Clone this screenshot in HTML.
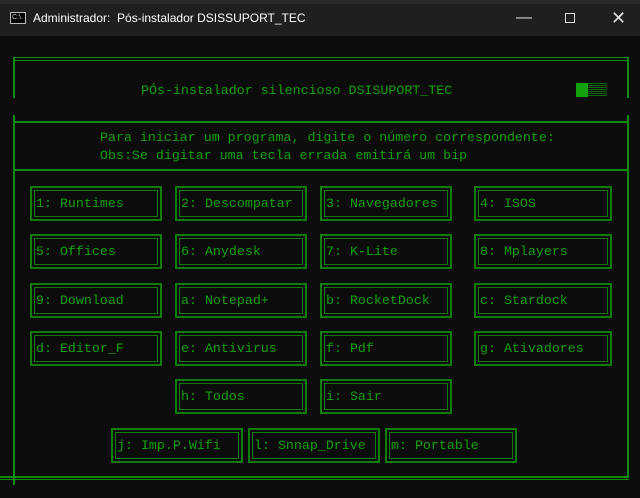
<!DOCTYPE html>
<html><head><meta charset="utf-8"><style>
*{margin:0;padding:0;box-sizing:border-box}
body{width:640px;height:498px;background:#0c0c0c;position:relative;overflow:hidden;font-family:"Liberation Mono",monospace;}
.tb{position:absolute;left:0;top:0;width:640px;height:36px;background:#1f1f1f;}
.top{position:absolute;left:0;top:0;width:640px;height:4px;background:#2a2a2a}
.tt{position:absolute;left:33px;top:11px;color:#fff;font:12px "Liberation Sans",sans-serif;}
.ic{position:absolute;left:10px;top:12px;width:16px;height:12px;border:1px solid #bbb;background:#000;color:#ccc;font:7px "Liberation Sans",sans-serif;line-height:9px;padding-left:1px}
.c{position:absolute;color:#ddd;font:16px "Liberation Sans",sans-serif}
.g{color:#13a10e;font-size:13.3px;position:absolute;white-space:pre;line-height:16px}
.ln{position:absolute;background:#108a0c}
.b{position:absolute;height:35px;border:2px solid #107c0c;padding:2px}
.b div{width:100%;height:100%;border:1px solid #107c0c}
.b span{position:absolute;left:4px;top:8px;color:#13a10e;font-size:13.3px;white-space:pre}
</style></head><body>
<div class="tb"></div><div class="top"></div>
<div class="ic">C:\.</div>
<div class="tt">Administrador:&nbsp; Pós-instalador DSISSUPORT_TEC</div>
<div class="c" style="left:516px;top:9px">—</div>
<div style="position:absolute;left:565px;top:13px;width:10px;height:10px;border:1px solid #ddd"></div>
<div class="c" style="left:611px;top:8px;font-size:18px">✕</div>

<!-- outer frame lines -->
<div class="ln" style="left:13px;top:57px;width:616px;height:1px"></div>
<div class="ln" style="left:15px;top:60px;width:612px;height:1px"></div>
<div class="ln" style="left:13px;top:57px;width:2px;height:41px"></div>
<div class="ln" style="left:627px;top:57px;width:2px;height:41px"></div>
<div class="ln" style="left:13px;top:115px;width:2px;height:370px"></div>
<div class="ln" style="left:627px;top:115px;width:2px;height:362px"></div>
<div class="ln" style="left:13px;top:121px;width:616px;height:2px"></div>
<div class="ln" style="left:13px;top:169px;width:616px;height:2px"></div>
<div class="ln" style="left:0px;top:476px;width:629px;height:2px"></div>
<div class="ln" style="left:0px;top:479px;width:629px;height:1px"></div>

<div class="g" style="left:141px;top:83px">PÓs-instalador silencioso DSISUPORT_TEC</div>
<div style="position:absolute;left:576px;top:83px;width:12px;height:14px;background:#13a10e"></div>
<div style="position:absolute;left:588px;top:83px;width:19px;height:14px;background:repeating-linear-gradient(#13a10e 0 1px,transparent 1px 2px);opacity:.6"></div>

<div class="g" style="left:100px;top:130px">Para iniciar um programa, digite o número correspondente:</div>
<div class="g" style="left:100px;top:148px">Obs:Se digitar uma tecla errada emitirá um bip</div>

<div class="b" style="left:30px;top:186px;width:132px"><div></div><span>1: Runtimes</span></div>
<div class="b" style="left:175px;top:186px;width:132px"><div></div><span>2: Descompatar</span></div>
<div class="b" style="left:320px;top:186px;width:132px"><div></div><span>3: Navegadores</span></div>
<div class="b" style="left:474px;top:186px;width:138px"><div></div><span>4: ISOS</span></div>

<div class="b" style="left:30px;top:234px;width:132px"><div></div><span>5: Offices</span></div>
<div class="b" style="left:175px;top:234px;width:132px"><div></div><span>6: Anydesk</span></div>
<div class="b" style="left:320px;top:234px;width:132px"><div></div><span>7: K-Lite</span></div>
<div class="b" style="left:474px;top:234px;width:138px"><div></div><span>8: Mplayers</span></div>

<div class="b" style="left:30px;top:283px;width:132px"><div></div><span>9: Download</span></div>
<div class="b" style="left:175px;top:283px;width:132px"><div></div><span>a: Notepad+</span></div>
<div class="b" style="left:320px;top:283px;width:132px"><div></div><span>b: RocketDock</span></div>
<div class="b" style="left:474px;top:283px;width:138px"><div></div><span>c: Stardock</span></div>

<div class="b" style="left:30px;top:331px;width:132px"><div></div><span>d: Editor_F</span></div>
<div class="b" style="left:175px;top:331px;width:132px"><div></div><span>e: Antivirus</span></div>
<div class="b" style="left:320px;top:331px;width:132px"><div></div><span>f: Pdf</span></div>
<div class="b" style="left:474px;top:331px;width:138px"><div></div><span>g: Ativadores</span></div>

<div class="b" style="left:175px;top:379px;width:132px"><div></div><span>h: Todos</span></div>
<div class="b" style="left:320px;top:379px;width:132px"><div></div><span>i: Sair</span></div>

<div class="b" style="left:111px;top:428px;width:132px"><div></div><span>j: Imp.P.Wifi</span></div>
<div class="b" style="left:248px;top:428px;width:132px"><div></div><span>l: Snnap_Drive</span></div>
<div class="b" style="left:385px;top:428px;width:132px"><div></div><span>m: Portable</span></div>
</body></html>
